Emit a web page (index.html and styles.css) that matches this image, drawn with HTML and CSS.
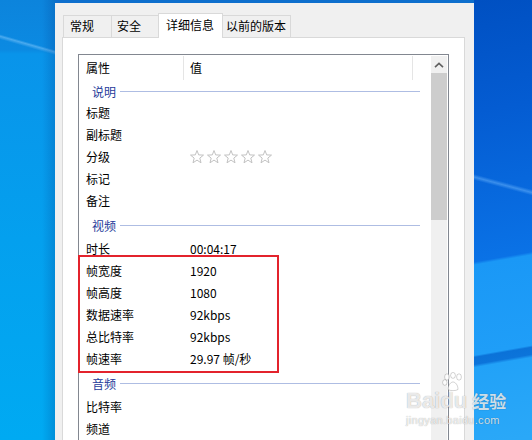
FILE: index.html
```html
<!DOCTYPE html>
<html lang="zh-CN">
    <head>
        <meta charset="UTF-8" />
        <title>属性 - 详细信息</title>
        <link rel="stylesheet" href="styles.css">
    </head>
    <body>
        <div class="screen">
            <div class="desk desk_left"></div>

            <div class="window">
                <!-- 탭 -->
                <div class="tabs">
                    <div class="tab t1">常规</div>
                    <div class="tab t2">安全</div>
                    <div class="tab t3 on">详细信息</div>
                    <div class="tab t4">以前的版本</div>
                </div>

                <div class="panel">
                    <div class="listbox">
                        <div class="list">
                            <div class="head">
                                <div class="h_name">属性</div>
                                <div class="h_val">值</div>
                            </div>

                            <div class="group first"><span>说明</span></div>
                            <div class="row"><span>标题</span><span></span></div>
                            <div class="row"><span>副标题</span><span></span></div>
                            <div class="row">
                                <span>分级</span>
                                <span class="stars">
                                    <svg width="84" height="14" viewBox="0 0 84 14">
                                        <defs>
                                            <polygon id="star" points="7,0.5 8.7,4.9 13.5,5.1 9.8,8.1 11,12.8 7,10.1 3,12.8 4.2,8.1 0.5,5.1 5.3,4.9" />
                                        </defs>
                                        <use href="#star" x="0" />
                                        <use href="#star" x="17" />
                                        <use href="#star" x="34" />
                                        <use href="#star" x="51" />
                                        <use href="#star" x="68" />
                                    </svg>
                                </span>
                            </div>
                            <div class="row"><span>标记</span><span></span></div>
                            <div class="row"><span>备注</span><span></span></div>

                            <div class="group"><span>视频</span></div>
                            <div class="row"><span>时长</span><span>00:04:17</span></div>
                            <div class="row"><span>帧宽度</span><span>1920</span></div>
                            <div class="row"><span>帧高度</span><span>1080</span></div>
                            <div class="row"><span>数据速率</span><span>92kbps</span></div>
                            <div class="row"><span>总比特率</span><span>92kbps</span></div>
                            <div class="row"><span>帧速率</span><span>29.97 帧/秒</span></div>

                            <div class="group"><span>音频</span></div>
                            <div class="row"><span>比特率</span><span></span></div>
                            <div class="row"><span>频道</span><span></span></div>
                        </div>

                        <!-- 스크롤바 -->
                        <div class="scrollbar">
                            <div class="sb_up">
                                <svg width="10" height="6" viewBox="0 0 10 6">
                                    <polyline points="1,5.2 5,1.4 9,5.2" fill="none" stroke="#606060" stroke-width="1.6" />
                                </svg>
                            </div>
                            <div class="sb_thumb"></div>
                        </div>
                    </div>
                </div>
            </div>

            <div class="desk desk_right"></div>

            <!-- 빨간 표시 -->
            <div class="mark"></div>

            <!-- 워터마크 -->
            <div class="watermark">
                <div class="wm_top">
                    <span class="wm_bai">Bai</span>
                    <span class="wm_du">
                        <svg class="paw" width="22" height="20" viewBox="0 0 22 20">
                            <ellipse cx="5" cy="5" rx="2.4" ry="3.2" />
                            <ellipse cx="11" cy="3.4" rx="2.4" ry="3" />
                            <ellipse cx="17" cy="5" rx="2.4" ry="3.2" />
                            <ellipse cx="2.8" cy="10.5" rx="2.2" ry="2.8" />
                            <path d="M6 17.5 C6 12.5 9 10 11 10 C13 10 16 12.5 16 17.5 C14 19 8 19 6 17.5 Z" />
                        </svg>du
                    </span>
                    <span class="wm_jy">经验</span>
                </div>
                <div class="wm_url">jingyan.baidu.com</div>
            </div>
        </div>
    </body>
</html>
```

FILE: styles.css
```css
* {
    margin: 0px;
    padding: 0px;
    box-sizing: border-box;
}

body {
    font-family: "Noto Sans CJK SC", "Microsoft YaHei", sans-serif;
    font-size: 12px;
    color: #000;
}

.screen {
    position: relative;
    width: 532px;
    height: 440px;
    display: flex;
    overflow: hidden;
}

/* 바탕화면 */
.desk {
    height: 100%;
}
.desk_left {
    width: 55px;
    background:
        linear-gradient(to right, rgba(0, 0, 0, 0) 42px, rgba(0, 40, 120, 0.2) 55px),
        linear-gradient(196deg, transparent 48px, rgba(150, 210, 255, 0.45) 50px, transparent 53px),
        linear-gradient(to bottom, #0c84dc 0, #0b8ae2 50px, #0994ea 54px, #04a0ee 240px, #00aaf2 440px);
}
.desk_right {
    width: 58px;
    background:
        linear-gradient(195deg, transparent 183px, rgba(120, 190, 255, 0.45) 186px, transparent 189px),
        linear-gradient(170deg, #0050c2 0, #045cd2 110px, #0a72e6 258px, #1a98f6 261px, #1f9ef8 350px, #0b72d8 352px, #0c74da 359px, #22a2f8 362px, #2aa8f8 440px);
}

/* 창 */
.window {
    width: 419px;
    height: 100%;
    background-color: #f0f0f0;
    border-top: 3px solid #0e6fcd;
    padding-top: 10px;
}

.tabs {
    display: flex;
    align-items: flex-start;
    height: 25px;
    margin-left: 8px;
}
.tab {
    height: 22px;
    margin-top: 2px;
    margin-left: -1px;
    border: 1px solid #d9d9d9;
    border-bottom: none;
    background-color: #f0f0f0;
    line-height: 20px;
    white-space: nowrap;
    cursor: default;
}
.t1 {
    width: 49px;
    margin-left: 0px;
    padding-left: 6px;
}
.t2 {
    width: 48px;
    padding-left: 5px;
}
.t3 {
    width: 65px;
    padding-left: 7px;
}
.t4 {
    width: 69px;
    padding-left: 3px;
}
.tab.on {
    height: 25px;
    margin-top: 0px;
    background-color: #fff;
    position: relative;
    z-index: 1;
    line-height: 22px;
}

.panel {
    width: 403px;
    height: 420px;
    margin-left: 7px;
    margin-top: -1px;
    background-color: #fff;
    border: 1px solid #d9d9d9;
    padding: 16px 15px 0px 15px;
}

/* 리스트 */
.listbox {
    display: flex;
    width: 371px;
    height: 400px;
    border: 1px solid #828790;
    padding: 1px;
}
.list {
    flex: 1;
}

.head {
    display: flex;
    height: 24px;
    line-height: 24px;
}
.h_name {
    width: 104px;
    padding-left: 6px;
    border-right: 1px solid #e5e5e5;
}
.h_val {
    width: 229px;
    padding-left: 6px;
    border-right: 1px solid #e5e5e5;
}

.group {
    display: flex;
    align-items: center;
    height: 26px;
    padding-left: 12px;
    padding-right: 11px;
    color: #1e3a9a;
}
.group.first {
    height: 22px;
}
.group::after {
    content: "";
    flex: 1;
    height: 1px;
    margin-left: 4px;
    background-color: #aebde3;
}

.row {
    display: grid;
    grid-template-columns: 104px 1fr;
    height: 22px;
    line-height: 22px;
    padding-left: 6px;
    white-space: nowrap;
}

.stars {
    display: flex;
    align-items: center;
}
.stars svg {
    fill: none;
    stroke: #c2c2c2;
    stroke-width: 1;
}

.scrollbar {
    width: 16px;
    background-color: #f0f0f0;
}
.sb_up {
    height: 17px;
    display: flex;
    align-items: center;
    justify-content: center;
}
.sb_thumb {
    height: 147px;
    background-color: #cdcdcd;
}

/* 표시 박스 */
.mark {
    position: absolute;
    left: 78px;
    top: 255px;
    width: 201px;
    height: 118px;
    border: 2px solid #e3232c;
}

/* 워터마크 */
.watermark {
    position: absolute;
    left: 406px;
    top: 380px;
    color: rgba(255, 255, 255, 0.8);
    text-shadow: 0 0 1px rgba(0, 0, 0, 0.4);
    font-family: "Liberation Sans", Arial, sans-serif;
    font-weight: bold;
}
.wm_top {
    display: flex;
    align-items: flex-end;
    height: 32px;
}
.wm_bai,
.wm_du {
    font-size: 22px;
    line-height: 22px;
}
.wm_du {
    position: relative;
}
.paw {
    position: absolute;
    left: 2px;
    top: -18px;
    fill: rgba(255, 255, 255, 0.8);
    stroke: rgba(0, 0, 0, 0.22);
    stroke-width: 0.8;
}
.wm_jy {
    margin-left: 5px;
    font-family: "Noto Sans CJK SC", sans-serif;
    font-size: 17px;
    line-height: 22px;
}
.wm_url {
    font-size: 11px;
    font-weight: normal;
    margin-top: 2px;
    letter-spacing: 0.3px;
}
```
